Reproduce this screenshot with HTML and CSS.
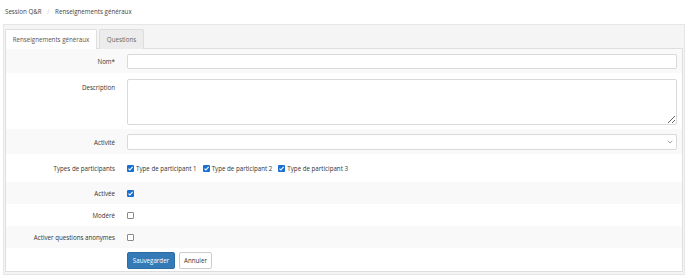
FILE: index.html
```html
<!DOCTYPE html>
<html lang="fr">
<head>
	<meta charset="UTF-8">
	<title>Session Q&amp;R</title>
	<link rel="stylesheet" href="styles.css">
</head>
<body>
	<div class="breadcrumb">
		<span>Session Q&amp;R</span>
		<span class="sep">/</span>
		<span>Renseignements généraux</span>
	</div>
	<div class="card">
		<ul class="tabs">
			<li class="tab active">Renseignements généraux</li>
			<li class="tab">Questions</li>
		</ul>
		<div class="tab-content">
			<div class="row odd nom">
				<label class="label">Nom*</label>
				<div class="field"><input class="input" type="text"></div>
			</div>
			<div class="row desc">
				<label class="label top">Description</label>
				<div class="field"><textarea class="input textarea"></textarea></div>
			</div>
			<div class="row odd act">
				<label class="label">Activité</label>
				<div class="field select-wrap">
					<select class="input select"><option></option></select>
					<svg class="chevron" width="6" height="4" viewBox="0 0 6 4"><path d="M0.7 0.8 L3 3 L5.3 0.8" fill="none" stroke="#888" stroke-width="0.8"/></svg>
				</div>
			</div>
			<div class="row types">
				<label class="label">Types de participants</label>
				<div class="field checks">
					<span class="check"><span class="box on"><svg width="7" height="7" viewBox="0 0 7 7"><path d="M1.5 3.6 L2.9 5 L5.6 1.9" fill="none" stroke="#fff" stroke-width="1.1"/></svg></span>Type de participant 1</span>
					<span class="check"><span class="box on"><svg width="7" height="7" viewBox="0 0 7 7"><path d="M1.5 3.6 L2.9 5 L5.6 1.9" fill="none" stroke="#fff" stroke-width="1.1"/></svg></span>Type de participant 2</span>
					<span class="check"><span class="box on"><svg width="7" height="7" viewBox="0 0 7 7"><path d="M1.5 3.6 L2.9 5 L5.6 1.9" fill="none" stroke="#fff" stroke-width="1.1"/></svg></span>Type de participant 3</span>
				</div>
			</div>
			<div class="row odd small">
				<label class="label">Activée</label>
				<div class="field checks"><span class="box on"><svg width="7" height="7" viewBox="0 0 7 7"><path d="M1.5 3.6 L2.9 5 L5.6 1.9" fill="none" stroke="#fff" stroke-width="1.1"/></svg></span></div>
			</div>
			<div class="row small">
				<label class="label">Modéré</label>
				<div class="field checks"><span class="box"></span></div>
			</div>
			<div class="row odd small">
				<label class="label">Activer questions anonymes</label>
				<div class="field checks"><span class="box"></span></div>
			</div>
			<div class="row actions">
				<div class="label"></div>
				<div class="field buttons">
					<button class="btn btn-primary">Sauvegarder</button>
					<button class="btn btn-cancel">Annuler</button>
				</div>
			</div>
		</div>
	</div>
</body>
</html>
```

FILE: styles.css
```css
*{
    margin: 0;
    padding: 0;
    box-sizing: border-box;
    font-family: "Open Sans", "Noto Sans", sans-serif;
}
body{
    background: #fff;
    color: #333;
    font-size: 6.2px;
    padding: 0 3px;
}
.breadcrumb{
    height: 24px;
    line-height: 23px;
    padding-left: 2px;
    color: #444;
}
.breadcrumb .sep{
    color: #ccc;
    margin: 0 4px;
}
.card{
    border: 1px solid #e6e6e6;
    background: #f5f5f5;
    padding: 4px 1px 2px 1px;
}
.tabs{
    list-style: none;
    display: flex;
    gap: 2px;
    height: 20px;
    margin-bottom: -1px;
}
.tab{
    height: 20px;
    line-height: 19px;
    white-space: nowrap;
    text-align: center;
    border: 1px solid #dedede;
    border-bottom: none;
    border-radius: 2px 2px 0 0;
    color: #666;
    background: #ececec;
    width: 45px;
}
.tab.active{
    background: #fff;
    color: #555;
    width: 92px;
    position: relative;
    z-index: 1;
}
.tab-content{
    background: #fff;
    border: 1px solid #dedede;
}
.row{
    display: flex;
    align-items: center;
    padding: 0 5px 0 0;
}
.row.odd{
    background: #f9f9f9;
}
.label{
    width: 109px;
    flex: none;
    text-align: right;
    margin-right: 12px;
    color: #333;
}
.row.nom{
    padding-top: 5px;
    padding-bottom: 4px;
}
.row.desc{
    align-items: flex-start;
    padding-top: 6px;
    padding-bottom: 4px;
}
.label.top{
    padding-top: 4px;
}
.row.act{
    padding-top: 5px;
    padding-bottom: 4px;
}
.field{
    flex: 1;
}
.input{
    display: block;
    width: 100%;
    height: 15px;
    border: 1px solid #d9d9d9;
    border-radius: 2px;
    background: #fff;
    font-size: 6.2px;
}
.textarea{
    height: 46px;
    resize: vertical;
}
.select-wrap{
    position: relative;
}
.select{
    -webkit-appearance: none;
    appearance: none;
    height: 16px;
}
.chevron{
    position: absolute;
    right: 4px;
    top: 6px;
}
.row.types{
    height: 28px;
}
.row.small{
    height: 22px;
}
.checks{
    display: flex;
    align-items: center;
    gap: 6px;
}
.check{
    display: flex;
    align-items: center;
    color: #333;
}
.box{
    display: inline-flex;
    flex: none;
    width: 7px;
    height: 7px;
    margin-right: 2px;
    border: 1px solid #8a8a8a;
    border-radius: 1px;
    background: #fff;
}
.box.on{
    border: none;
    background: #1a6fd3;
}
.row.actions{
    padding-top: 4px;
    padding-bottom: 2px;
}
.buttons{
    display: flex;
    gap: 4px;
}
.btn{
    height: 17px;
    border: 1px solid #ccc;
    border-radius: 2px;
    background: #fff;
    color: #333;
    font-size: 6.2px;
}
.btn-primary{
    background: #337ab7;
    border-color: #2e6da4;
    color: #fff;
    width: 48px;
}
.btn-cancel{
    width: 33px;
}
```
